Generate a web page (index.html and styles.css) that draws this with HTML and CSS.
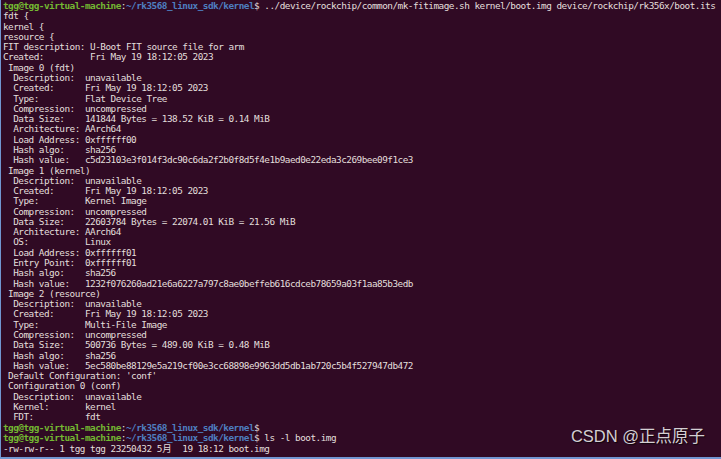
FILE: index.html
```html
<!DOCTYPE html>
<html lang="zh">
<head>
<meta charset="utf-8">
<title>terminal</title>
<link rel="stylesheet" href="styles.css">
</head>
<body>
<div class="term">
<pre class="out"><span class="u">tgg@tgg-virtual-machine</span>:<span class="p">~/rk3568_linux_sdk/kernel</span>$ ../device/rockchip/common/mk-fitimage.sh kernel/boot.img device/rockchip/rk356x/boot.its
fdt {
kernel {
resource {
FIT description: U-Boot FIT source file for arm
Created:         Fri May 19 18:12:05 2023
 Image 0 (fdt)
  Description:  unavailable
  Created:      Fri May 19 18:12:05 2023
  Type:         Flat Device Tree
  Compression:  uncompressed
  Data Size:    141844 Bytes = 138.52 KiB = 0.14 MiB
  Architecture: AArch64
  Load Address: 0xffffff00
  Hash algo:    sha256
  Hash value:   c5d23103e3f014f3dc90c6da2f2b0f8d5f4e1b9aed0e22eda3c269bee09f1ce3
 Image 1 (kernel)
  Description:  unavailable
  Created:      Fri May 19 18:12:05 2023
  Type:         Kernel Image
  Compression:  uncompressed
  Data Size:    22603784 Bytes = 22074.01 KiB = 21.56 MiB
  Architecture: AArch64
  OS:           Linux
  Load Address: 0xffffff01
  Entry Point:  0xffffff01
  Hash algo:    sha256
  Hash value:   1232f076260ad21e6a6227a797c8ae0beffeb616cdceb78659a03f1aa85b3edb
 Image 2 (resource)
  Description:  unavailable
  Created:      Fri May 19 18:12:05 2023
  Type:         Multi-File Image
  Compression:  uncompressed
  Data Size:    500736 Bytes = 489.00 KiB = 0.48 MiB
  Hash algo:    sha256
  Hash value:   5ec580be88129e5a219cf00e3cc68898e9963dd5db1ab720c5b4f527947db472
 Default Configuration: 'conf'
 Configuration 0 (conf)
  Description:  unavailable
  Kernel:       kernel
  FDT:          fdt
<span class="u">tgg@tgg-virtual-machine</span>:<span class="p">~/rk3568_linux_sdk/kernel</span>$
<span class="u">tgg@tgg-virtual-machine</span>:<span class="p">~/rk3568_linux_sdk/kernel</span>$ ls -l boot.img
-rw-rw-r-- 1 tgg tgg 23250432 5<span class="cjk">月</span>  19 18:12 boot.img</pre>
<div class="mark">CSDN @正点原子</div>
</div>
</body>
</html>
```
FILE: styles.css
```css
html, body {
  margin: 0;
  padding: 0;
}
body {
  width: 721px;
  height: 459px;
  overflow: hidden;
  background: #300a24;
}
.term {
  position: relative;
  box-sizing: border-box;
  width: 721px;
  height: 459px;
  background: #300a24;
  border-left: 1px solid #7196d1;
  border-bottom: 2px solid #7196d1;
  padding: 1px 0 0 2px;
  overflow: hidden;
}
.out {
  margin: 0;
  font-family: "DejaVu Sans Mono", monospace;
  font-size: 9.4px;
  letter-spacing: -0.52px;
  line-height: 10.28px;
  color: #e3dfdc;
  white-space: pre;
}
.u {
  color: #74b832;
  font-weight: bold;
}
.p {
  color: #4e7fc0;
  font-weight: bold;
}
.cjk {
  display: inline-block;
  width: 10.28px;
  font-family: "Noto Sans CJK SC", sans-serif;
  font-size: 9.5px;
  letter-spacing: 0;
  text-align: center;
}
.mark {
  position: absolute;
  right: 16px;
  bottom: 10px;
  font-family: "Liberation Sans", "Noto Sans CJK SC", sans-serif;
  font-size: 16.5px;
  color: #d4cfd3;
  text-shadow: 1px 1px 1px rgba(0, 0, 0, 0.7);
}
```
